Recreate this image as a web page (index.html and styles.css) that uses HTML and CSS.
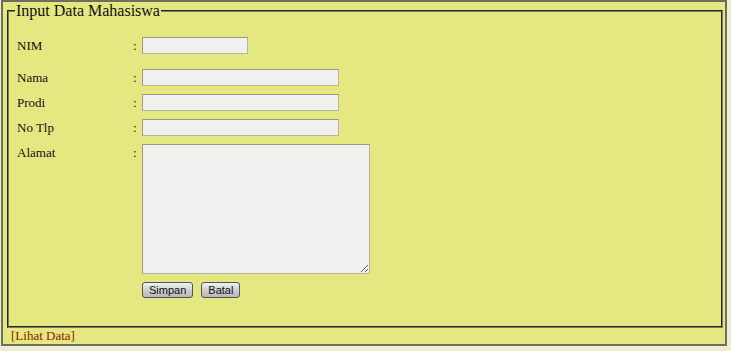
FILE: index.html
```html
<!DOCTYPE html>
<html lang="en">
<head>
    <meta charset="UTF-8">
    <meta name="viewport" content="width=device-width, initial-scale=1.0">
    <title>Input Data Mahasiswa</title>
    <link rel="stylesheet" href="styles.css">
</head>
<body>
    <div class="wrapper">
        <fieldset class="panel">
            <legend>Input Data Mahasiswa</legend>
            <form class="mhs-form">
                <div class="form-row first">
                    <label for="nim">NIM</label>
                    <span class="colon">:</span>
                    <input type="text" id="nim" class="short">
                </div>
                <div class="form-row">
                    <label for="nama">Nama</label>
                    <span class="colon">:</span>
                    <input type="text" id="nama">
                </div>
                <div class="form-row">
                    <label for="prodi">Prodi</label>
                    <span class="colon">:</span>
                    <input type="text" id="prodi">
                </div>
                <div class="form-row">
                    <label for="tlp">No Tlp</label>
                    <span class="colon">:</span>
                    <input type="text" id="tlp">
                </div>
                <div class="form-row">
                    <label for="alamat">Alamat</label>
                    <span class="colon">:</span>
                    <textarea id="alamat"></textarea>
                </div>
                <div class="buttons">
                    <button type="submit">Simpan</button>
                    <button type="reset">Batal</button>
                </div>
            </form>
        </fieldset>
        <a href="#" class="lihat">[Lihat Data]</a>
    </div>
</body>
</html>
```

FILE: styles.css
```css
body {
    margin: 0;
    background-color: #eeeed3;
    font-family: "Liberation Serif", "Times New Roman", serif;
    font-size: 13px;
    color: #111;
}

.wrapper {
    margin: 0 4px 5px 1px;
    height: 342px;
    border: 2px solid #6e6e5c;
    background-color: #e5e781;
    display: flex;
    flex-direction: column;
}

.panel {
    margin: 0 2px 0 4px;
    padding: 0 8px 0 8px;
    border: 2px groove #7c7c64;
    height: 327px;
    box-sizing: border-box;
}

.panel legend {
    font-family: "Liberation Serif", "Times New Roman", serif;
    font-size: 16px;
    padding: 0 1px;
    margin-left: -2px;
    color: #111;
}

.mhs-form {
    padding-top: 17px;
}

.form-row {
    display: flex;
    align-items: flex-start;
    line-height: 17px;
    margin-bottom: 8px;
}

.form-row.first {
    margin-bottom: 15px;
}

.form-row label {
    width: 116px;
}

.colon {
    width: 9px;
}

input,
textarea {
    box-sizing: border-box;
    margin: 0;
    background-color: #f0f0ee;
    border: 1px solid #b4b4a0;
    border-top-color: #9a9a8a;
    border-left-color: #9a9a8a;
    font-family: "Liberation Sans", Arial, sans-serif;
    font-size: 12px;
}

input {
    width: 197px;
    height: 17px;
    padding: 0 2px;
}

input.short {
    width: 106px;
}

textarea {
    display: block;
    width: 228px;
    height: 130px;
}

.buttons {
    display: flex;
    gap: 8px;
    margin-left: 125px;
    margin-top: 6px;
}

button {
    height: 16px;
    padding: 0 6px;
    font-family: "Liberation Sans", Arial, sans-serif;
    font-size: 11px;
    line-height: 13px;
    color: #111;
    border: 1px solid #555;
    border-radius: 3px;
    background: linear-gradient(#f2f2f2, #cfcfcf 50%, #b8b8b8);
    cursor: pointer;
}

.lihat {
    padding: 0 8px;
    line-height: 16px;
    margin-top: auto;
    font-family: "Liberation Serif", "Times New Roman", serif;
    color: #8a1c00;
    text-decoration: none;
}
```
